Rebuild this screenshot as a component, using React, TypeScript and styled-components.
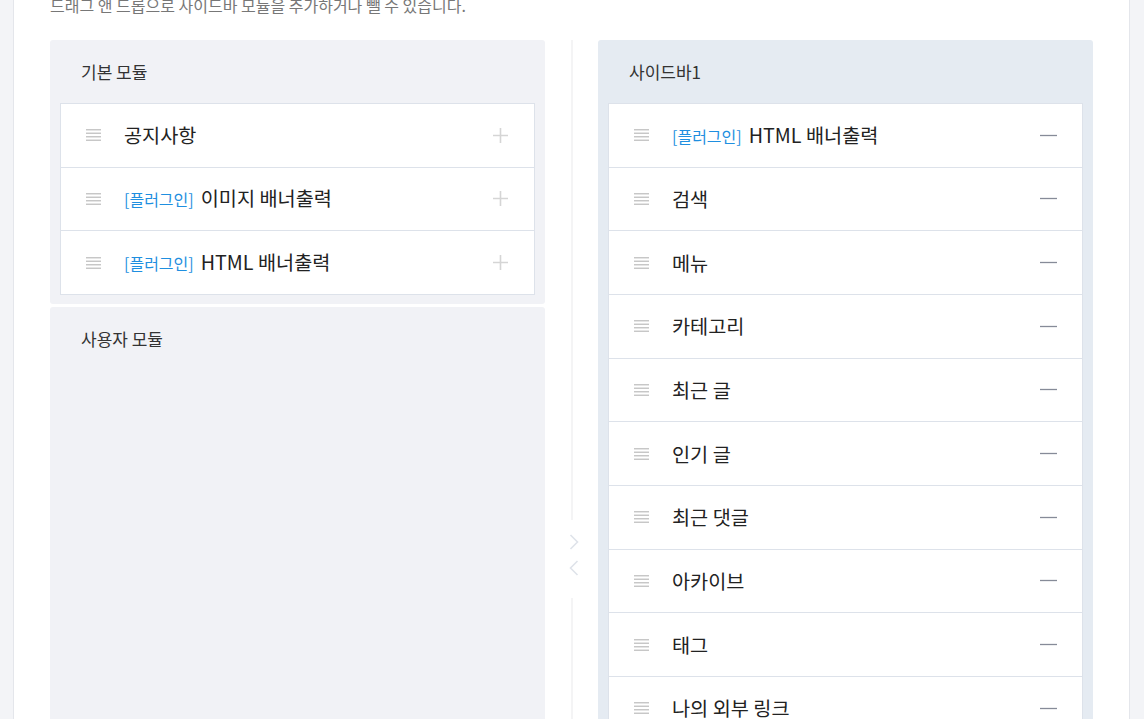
import React from "react";
import styled, { createGlobalStyle } from "styled-components";

const GlobalStyle = createGlobalStyle`
  html, body {
    margin: 0;
    padding: 0;
    background: #f3f4f7;
    overflow: hidden;
    font-family: "Noto Sans CJK KR", "Noto Sans", sans-serif;
  }
`;

const Page = styled.div`
  height: 719px;
  overflow: hidden;
  padding: 0 14px 0 13px;
`;

const Sheet = styled.div`
  background: #fff;
  border-left: 1px solid #e4e6eb;
  border-right: 1px solid #e4e6eb;
  padding: 0 35px 0 36px;
  min-height: 100%;
  box-sizing: border-box;
`;

const Desc = styled.p`
  margin: -6px 0 24px;
  font-size: 16px;
  line-height: 22px;
  color: #777;
`;

const Columns = styled.div`
  display: flex;
  align-items: flex-start;
`;

const Column = styled.div`
  width: 495px;
  display: flex;
  flex-direction: column;
  gap: 3px;
`;

const Panel = styled.section<{ $tone: "gray" | "blue"; $fill?: boolean }>`
  background: ${(p) => (p.$tone === "blue" ? "#e5ebf2" : "#f1f2f6")};
  border-radius: 3px;
  padding: 0 10px 9px;
  min-height: ${(p) => (p.$fill ? "500px" : "auto")};
`;

const PanelTitle = styled.h3`
  margin: 0;
  padding: 22px 0 21px 21px;
  font-size: 17px;
  line-height: 20px;
  font-weight: 400;
  color: #333;
`;

const List = styled.ul`
  list-style: none;
  margin: 0;
  padding: 0;
  background: #fff;
  border: 1px solid #dde2ea;
`;

const Row = styled.li`
  display: flex;
  align-items: center;
  height: 63.67px;
  box-sizing: border-box;
  padding: 0 25px 0 25px;
  border-top: 1px solid #dde2ea;
  &:first-child {
    border-top: none;
    height: 62.67px;
  }
`;

const Handle = styled.svg`
  flex: none;
  width: 16px;
  height: 12px;
  margin-right: 22px;
`;

const Label = styled.span`
  flex: 1;
  font-size: 19.7px;
  line-height: 24px;
  color: #222;
  white-space: nowrap;
`;

const Tag = styled.span`
  font-size: 16px;
  color: #1f8fe0;
  margin-right: 7px;
`;

const Action = styled.svg`
  flex: none;
  width: 17px;
  height: 17px;
`;

const Divider = styled.div`
  width: 53px;
  display: flex;
  flex-direction: column;
  align-items: center;
  align-self: stretch;
`;

const Line = styled.div<{ $h: number }>`
  width: 2px;
  height: ${(p) => p.$h}px;
  background: #f4f4f5;
`;

const Arrows = styled.div`
  display: flex;
  flex-direction: column;
  gap: 10px;
  padding: 14px 0 22px 4px;
`;

const DragIcon = () => (
  <Handle viewBox="0 0 16 12">
    {[0.75, 4.25, 7.75, 11.25].map((y) => (
      <line key={y} x1="0" x2="15" y1={y} y2={y} stroke="#c4c4c4" strokeWidth="1.4" />
    ))}
  </Handle>
);

const PlusIcon = () => (
  <Action viewBox="0 0 17 17">
    <path d="M8.5 1v15M1 8.5h15" stroke="#d5d5d5" strokeWidth="1.6" />
  </Action>
);

const MinusIcon = () => (
  <Action viewBox="0 0 17 17">
    <path d="M0 8.5h17" stroke="#868b98" strokeWidth="1.3" />
  </Action>
);

const Chevron = ({ dir }: { dir: "right" | "left" }) => (
  <svg width="10" height="16" viewBox="0 0 10 16">
    <path
      d={dir === "right" ? "M1.5 1l7 7-7 7" : "M8.5 1l-7 7 7 7"}
      fill="none"
      stroke="#dfe3ea"
      strokeWidth="1.6"
    />
  </svg>
);

type Item = { tag?: string; name: string };

const basic: Item[] = [
  { name: "공지사항" },
  { tag: "[플러그인]", name: "이미지 배너출력" },
  { tag: "[플러그인]", name: "HTML 배너출력" },
];

const sidebar: Item[] = [
  { tag: "[플러그인]", name: "HTML 배너출력" },
  { name: "검색" },
  { name: "메뉴" },
  { name: "카테고리" },
  { name: "최근 글" },
  { name: "인기 글" },
  { name: "최근 댓글" },
  { name: "아카이브" },
  { name: "태그" },
  { name: "나의 외부 링크" },
  { name: "방문자 수" },
];

const ModuleRow = ({ item, add }: { item: Item; add?: boolean }) => (
  <Row>
    <DragIcon />
    <Label>
      {item.tag && <Tag>{item.tag}</Tag>}
      {item.name}
    </Label>
    {add ? <PlusIcon /> : <MinusIcon />}
  </Row>
);

export default function App() {
  return (
    <Page>
      <GlobalStyle />
      <Sheet>
        <Desc>드래그 앤 드롭으로 사이드바 모듈을 추가하거나 뺄 수 있습니다.</Desc>
        <Columns>
          <Column>
            <Panel $tone="gray">
              <PanelTitle>기본 모듈</PanelTitle>
              <List>
                {basic.map((it) => (
                  <ModuleRow key={it.name} item={it} add />
                ))}
              </List>
            </Panel>
            <Panel $tone="gray" $fill>
              <PanelTitle>사용자 모듈</PanelTitle>
            </Panel>
          </Column>
          <Divider>
            <Line $h={480} />
            <Arrows>
              <Chevron dir="right" />
              <Chevron dir="left" />
            </Arrows>
            <Line $h={300} />
          </Divider>
          <Column>
            <Panel $tone="blue">
              <PanelTitle>사이드바1</PanelTitle>
              <List>
                {sidebar.map((it) => (
                  <ModuleRow key={it.name} item={it} />
                ))}
              </List>
            </Panel>
          </Column>
        </Columns>
      </Sheet>
    </Page>
  );
}
